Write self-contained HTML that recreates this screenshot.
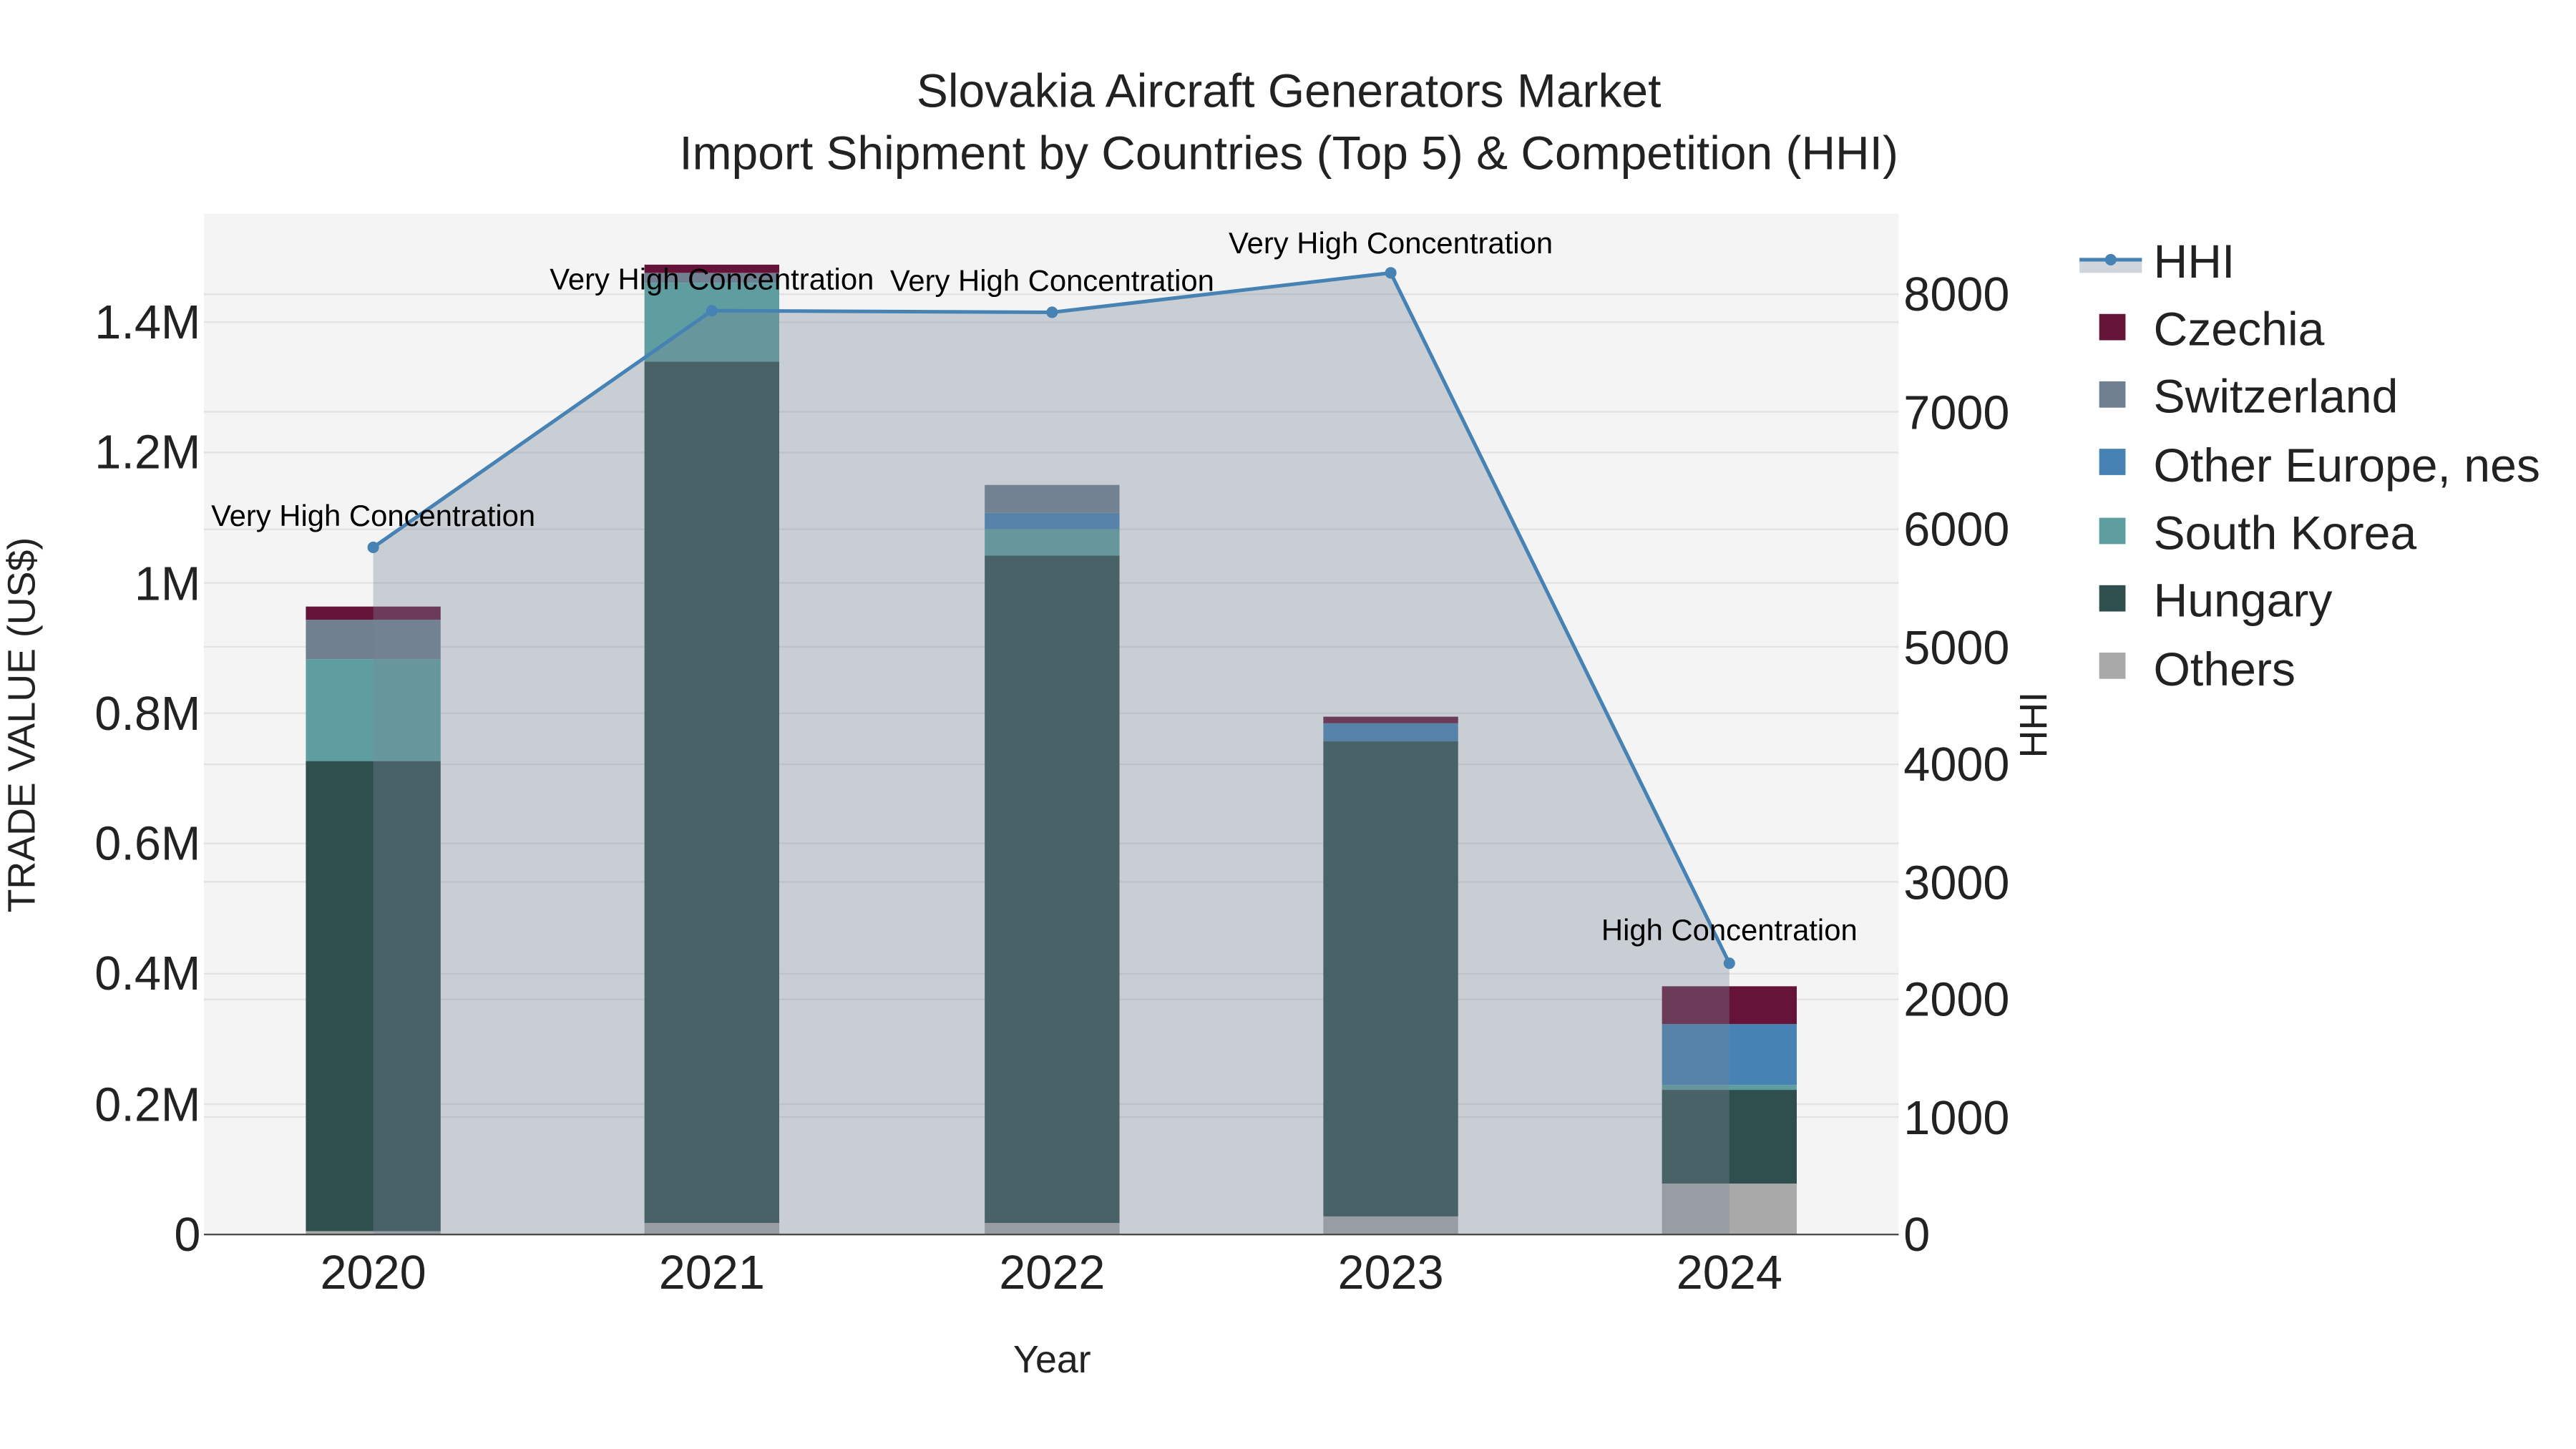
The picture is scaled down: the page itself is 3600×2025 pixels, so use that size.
<!DOCTYPE html>
<html><head><meta charset="utf-8"><style>html,body{margin:0;padding:0;background:#fff}svg{display:block}</style></head>
<body>
<svg width="3600" height="2025" viewBox="0 0 1567 881.5" xmlns="http://www.w3.org/2000/svg" font-family="Liberation Sans, sans-serif">
<rect x="0" y="0" width="1567" height="881.5" fill="#fff"/>
<rect x="124" y="130" width="1031" height="621" fill="#f4f4f4"/>
<g stroke="#e2e2e2" stroke-width="1">
<line x1="124" x2="1155" y1="671.7" y2="671.7"/><line x1="124" x2="1155" y1="592.4" y2="592.4"/><line x1="124" x2="1155" y1="513.1" y2="513.1"/><line x1="124" x2="1155" y1="433.9" y2="433.9"/><line x1="124" x2="1155" y1="354.6" y2="354.6"/><line x1="124" x2="1155" y1="275.3" y2="275.3"/><line x1="124" x2="1155" y1="196" y2="196"/>
<line x1="124" x2="1155" y1="679.5" y2="679.5"/><line x1="124" x2="1155" y1="608" y2="608"/><line x1="124" x2="1155" y1="536.5" y2="536.5"/><line x1="124" x2="1155" y1="465" y2="465"/><line x1="124" x2="1155" y1="393.5" y2="393.5"/><line x1="124" x2="1155" y1="322" y2="322"/><line x1="124" x2="1155" y1="250.5" y2="250.5"/><line x1="124" x2="1155" y1="179" y2="179"/>
</g>
<g>
<rect x="186" y="749" width="82" height="2" fill="#a9a9a9"/><rect x="186" y="463" width="82" height="286" fill="#2f4f4f"/><rect x="186" y="401" width="82" height="62" fill="#5f9ea0"/><rect x="186" y="377" width="82" height="24" fill="#708090"/><rect x="186" y="369" width="82" height="8" fill="#661339"/>
<rect x="392" y="744" width="82" height="7" fill="#a9a9a9"/><rect x="392" y="220" width="82" height="524" fill="#2f4f4f"/><rect x="392" y="172" width="82" height="48" fill="#5f9ea0"/><rect x="392" y="166" width="82" height="6" fill="#708090"/><rect x="392" y="161" width="82" height="5" fill="#661339"/>
<rect x="599" y="744" width="82" height="7" fill="#a9a9a9"/><rect x="599" y="338" width="82" height="406" fill="#2f4f4f"/><rect x="599" y="322" width="82" height="16" fill="#5f9ea0"/><rect x="599" y="312" width="82" height="10" fill="#4682b4"/><rect x="599" y="295" width="82" height="17" fill="#708090"/>
<rect x="805" y="740" width="82" height="11" fill="#a9a9a9"/><rect x="805" y="451" width="82" height="289" fill="#2f4f4f"/><rect x="805" y="440" width="82" height="11" fill="#4682b4"/><rect x="805" y="436" width="82" height="4" fill="#661339"/>
<rect x="1011" y="720" width="82" height="31" fill="#a9a9a9"/><rect x="1011" y="663" width="82" height="57" fill="#2f4f4f"/><rect x="1011" y="660" width="82" height="3" fill="#5f9ea0"/><rect x="1011" y="623" width="82" height="37" fill="#4682b4"/><rect x="1011" y="600" width="82" height="23" fill="#661339"/>
</g>
<polygon points="227,751 227,333 433,189 640,190 846,166 1052,586 1052,751" fill="rgba(119,136,153,0.35)"/>
<line x1="124" x2="1155" y1="751" y2="751" stroke="#444" stroke-width="1"/>
<polyline points="227,333 433,189 640,190 846,166 1052,586" fill="none" stroke="#4682b4" stroke-width="2.2"/>
<g fill="#4682b4"><circle cx="227" cy="333" r="3.5"/><circle cx="433" cy="189" r="3.5"/><circle cx="640" cy="190" r="3.5"/><circle cx="846" cy="166" r="3.5"/><circle cx="1052" cy="586" r="3.5"/></g>
<g font-size="18.2" fill="#000" text-anchor="middle">
<text x="227" y="320">Very High Concentration</text><text x="433" y="176">Very High Concentration</text><text x="640" y="177">Very High Concentration</text><text x="846" y="154">Very High Concentration</text><text x="1052" y="572">High Concentration</text>
</g>
<g font-size="29" fill="#222" text-anchor="end">
<text x="122" y="761">0</text><text x="122" y="682">0.2M</text><text x="122" y="602">0.4M</text><text x="122" y="523">0.6M</text><text x="122" y="444">0.8M</text><text x="122" y="365">1M</text><text x="122" y="285">1.2M</text><text x="122" y="206">1.4M</text>
</g>
<g font-size="29" fill="#222" text-anchor="start">
<text x="1158" y="761">0</text><text x="1158" y="690">1000</text><text x="1158" y="618">2000</text><text x="1158" y="547">3000</text><text x="1158" y="475">4000</text><text x="1158" y="404">5000</text><text x="1158" y="332">6000</text><text x="1158" y="261">7000</text><text x="1158" y="189">8000</text>
</g>
<g font-size="29" fill="#222" text-anchor="middle">
<text x="227" y="784">2020</text><text x="433" y="784">2021</text><text x="640" y="784">2022</text><text x="846" y="784">2023</text><text x="1052" y="784">2024</text>
</g>
<text x="640" y="835" font-size="23.4" text-anchor="middle" fill="#222">Year</text>
<text transform="translate(21,441) rotate(-90)" font-size="23.4" text-anchor="middle" fill="#222">TRADE VALUE (US$)</text>
<text transform="translate(1245,441) rotate(-90)" font-size="23.4" text-anchor="middle" fill="#222">HHI</text>
<text x="784" y="65" font-size="28.7" text-anchor="middle" fill="#222">Slovakia Aircraft Generators Market</text>
<text x="784" y="103" font-size="28.7" text-anchor="middle" fill="#222">Import Shipment by Countries (Top 5) &amp; Competition (HHI)</text>
<g font-size="28.8" fill="#222">
<rect x="1265" y="158" width="38" height="8" fill="rgba(119,136,153,0.35)"/><line x1="1265" x2="1303" y1="158" y2="158" stroke="#4682b4" stroke-width="2.2"/><circle cx="1284" cy="158" r="3.5" fill="#4682b4"/>
<text x="1310" y="169">HHI</text>
<rect x="1277" y="191" width="16" height="16" fill="#661339"/><text x="1310" y="210">Czechia</text>
<rect x="1277" y="232" width="16" height="16" fill="#708090"/><text x="1310" y="251">Switzerland</text>
<rect x="1277" y="273" width="16" height="16" fill="#4682b4"/><text x="1310" y="293">Other Europe, nes</text>
<rect x="1277" y="315" width="16" height="16" fill="#5f9ea0"/><text x="1310" y="334">South Korea</text>
<rect x="1277" y="356" width="16" height="16" fill="#2f4f4f"/><text x="1310" y="375">Hungary</text>
<rect x="1277" y="397" width="16" height="16" fill="#a9a9a9"/><text x="1310" y="417">Others</text>
</g>
</svg>
</body></html>
